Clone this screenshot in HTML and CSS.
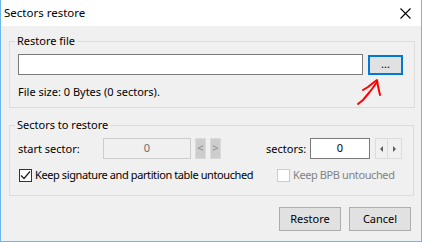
FILE: index.html
```html
<!DOCTYPE html>
<html lang="en">

<head>
    <meta charset="UTF-8">
    <meta name="viewport" content="width=device-width, initial-scale=1.0">
    <link rel="stylesheet" href="styles.css">
</head>

<body>
    <div class="window">
        <div class="titlebar">
            <span class="title">Sectors restore</span>
            <div class="close">
                <svg width="11" height="11" viewBox="0 0 11 11">
                    <path d="M0.5 0.5 L10.5 10.5 M10.5 0.5 L0.5 10.5" stroke="#000" stroke-width="1.1" fill="none"></path>
                </svg>
            </div>
        </div>

        <div class="content">
            <fieldset class="group group-file">
                <legend>Restore file</legend>
                <div class="row">
                    <div class="field file-path"></div>
                    <div class="btn browse">...</div>
                </div>
                <div class="file-size">File size: 0 Bytes (0 sectors).</div>
            </fieldset>

            <fieldset class="group group-sectors">
                <legend>Sectors to restore</legend>
                <div class="row">
                    <div class="lbl start-lbl">start sector:</div>
                    <div class="field start disabled">0</div>
                    <div class="nav">&lt;</div>
                    <div class="nav">&gt;</div>
                    <div class="lbl count-lbl">sectors:</div>
                    <div class="field count">0</div>
                    <div class="spin">
                        <div class="spin-half"><span class="tri tri-left"></span></div>
                        <div class="spin-half"><span class="tri tri-right"></span></div>
                    </div>
                </div>
                <div class="row check-row">
                    <div class="check check-main">
                        <span class="box">
                            <svg width="11" height="11" viewBox="0 0 11 11">
                                <path d="M1 5.5 L4 8.5 L10 1.5" stroke="#222" stroke-width="1.2" fill="none"></path>
                            </svg>
                        </span>
                        Keep signature and partition table untouched
                    </div>
                    <div class="check disabled">
                        <span class="box"></span>
                        Keep BPB untouched
                    </div>
                </div>
            </fieldset>

            <div class="actions">
                <div class="btn">Restore</div>
                <div class="btn">Cancel</div>
            </div>
        </div>

        <!-- hand drawn hint arrow -->
        <svg class="hint" width="40" height="40" viewBox="0 0 40 40">
            <path d="M2 28 L7 24 L12 18 L16 13 L21 6" stroke="#ff0000" stroke-width="2" fill="none" stroke-linecap="round" stroke-linejoin="round"></path>
            <path d="M7 14 L12 11 L17 7 L21 4 L22 10 L24 19" stroke="#ff0000" stroke-width="2" fill="none" stroke-linecap="round" stroke-linejoin="round"></path>
        </svg>
    </div>
</body>

</html>
```

FILE: styles.css
```css
body {
    margin: 0;
    font-family: "Noto Sans", "Open Sans", sans-serif;
    font-size: 11px;
    color: #000;
}

.window {
    position: relative;
    width: 422px;
    height: 242px;
    box-sizing: border-box;
    border: 1px solid #6cb8ec;
    border-top: none;
    background: #f0f0f0;
    white-space: nowrap;
}

.titlebar {
    height: 26px;
    background: #fff;
    display: flex;
    align-items: center;
    justify-content: space-between;
    padding-left: 3px;
}

.title {
    font-size: 11.5px;
    line-height: 16px;
    margin-top: -1px;
}

.close {
    width: 24px;
    display: flex;
    justify-content: center;
    margin-right: 4px;
}

.content {
    padding: 7px 7px 0 8px;
}

.group {
    margin: 0;
    border: 1px solid #dcdcdc;
    padding: 5px 11px 7px 8px;
}

.group legend {
    margin-left: -3px;
    padding: 0 2px;
    line-height: 16px;
}

.group-sectors {
    margin-top: 9px;
    padding-bottom: 12px;
}

.row {
    display: flex;
    align-items: center;
}

.field {
    box-sizing: border-box;
    height: 21px;
    border: 1px solid #7a7a7a;
    background: #fff;
    text-align: center;
    line-height: 17px;
}

.file-path {
    width: 345px;
}

.btn {
    box-sizing: border-box;
    background: #e1e1e1;
    border: 1px solid #adadad;
    text-align: center;
}

.browse {
    width: 35px;
    height: 20px;
    margin-left: 5px;
    border: 2px solid #0078d7;
    line-height: 13px;
}

.file-size {
    margin-top: 9px;
    line-height: 16px;
}

.start-lbl {
    width: 85px;
}

.start {
    width: 88px;
}

.field.disabled {
    background: #f0f0f0;
    border-color: #cccccc;
    color: #6d6d6d;
}

.nav {
    box-sizing: border-box;
    width: 11px;
    height: 21px;
    margin-left: 4px;
    background: #cdcdcd;
    border: 1px solid #dadada;
    color: #8a8a8a;
    text-align: center;
    line-height: 18px;
}

.count-lbl {
    margin-left: 45px;
    width: 44px;
}

.count {
    width: 60px;
}

.spin {
    display: flex;
    margin-left: 5px;
}

.spin-half {
    box-sizing: border-box;
    width: 13px;
    height: 21px;
    border: 1px solid #dcdcdc;
    display: flex;
    align-items: center;
    justify-content: center;
}

.spin-half + .spin-half {
    border-left: none;
    width: 14px;
}

.tri {
    width: 0;
    height: 0;
    border-top: 3px solid transparent;
    border-bottom: 3px solid transparent;
}

.tri-left {
    border-right: 3px solid #606060;
}

.tri-right {
    border-left: 3px solid #606060;
}

.check-row {
    margin-top: 8px;
    line-height: 16px;
    letter-spacing: -0.4px;
}

.check {
    display: flex;
    align-items: center;
}

.check-main {
    width: 258px;
    margin-left: 1px;
}

.box {
    box-sizing: border-box;
    width: 13px;
    height: 13px;
    border: 1px solid #333;
    background: #fff;
    margin-right: 3px;
    display: flex;
    align-items: center;
    justify-content: center;
}

.check.disabled {
    color: #838383;
}

.check.disabled .box {
    border-color: #cccccc;
}

.actions {
    display: flex;
    justify-content: flex-end;
    gap: 8px;
    margin-top: 11px;
    margin-right: 3px;
}

.actions .btn {
    width: 62px;
    height: 24px;
    line-height: 22px;
}

.hint {
    position: absolute;
    left: 355px;
    top: 76px;
}
```
